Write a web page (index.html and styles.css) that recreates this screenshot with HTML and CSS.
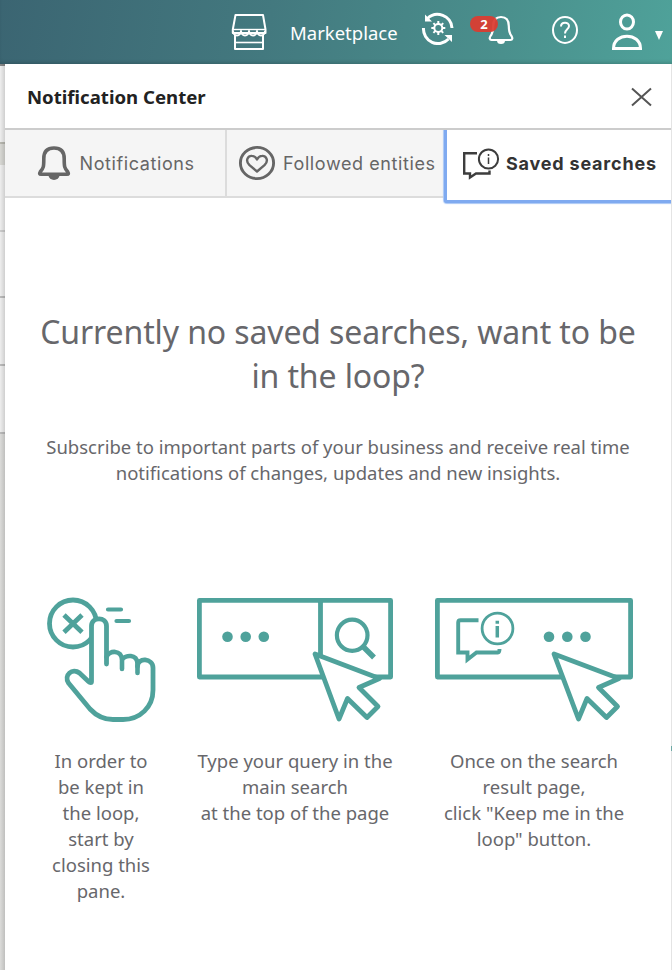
FILE: index.html
```html
<!DOCTYPE html>
<html lang="en">
<head>
<meta charset="utf-8">
<title>Notification Center</title>
<link rel="stylesheet" href="styles.css">
</head>
<body>
<header class="topbar">
  <svg class="ico-store" viewBox="231 13 36 38" fill="none" stroke="#fff" stroke-width="2" stroke-linejoin="round">
    <path d="M235.500 15H263L265.500 29.500V33H232.800V29.500Z"/><path d="M233 29.500H265" stroke-width="1.400"/>
    <path d="M233 31a4 4.500 0 0 0 8 0a4 4.500 0 0 0 8 0a4 4.500 0 0 0 8 0a4 4.500 0 0 0 8 0"/>
    <path d="M235 35V49H263V35" /><path d="M235 42.500H263" stroke-width="1.600"/>
  </svg>
  <span class="market">Marketplace</span>
  <svg class="ico-sync" viewBox="421 11 34 34" fill="none" stroke="#fff">
    <path d="M427.500 18.500A14.500 14.500 0 0 1 452 28M423.500 28A14.500 14.500 0 0 0 448.500 39" stroke-width="3"/>
    <path d="M425 14.500V21.500H432ZM452 42V35H444.500Z" fill="#fff" stroke="none"/>
    <circle cx="438.300" cy="28" r="4" stroke-width="2"/>
    <path d="M438.300 21v3M438.300 32v3M431.300 28h3M442.300 28h3M433.400 23.100l2 2M441.200 30.900l2 2M433.400 32.900l2-2M441.200 25.100l2-2" stroke-width="2"/>
  </svg>
  <span class="alerts">
    <svg viewBox="470 14 44 32" fill="none" stroke="#fff" stroke-width="2.200">
      <path d="M501 17C495.500 17 493.200 21 493.200 26C493.200 32 492.500 33.500 490.500 36C489.200 38 489.600 40 491.500 40H510.500C512.500 40 512.800 38 511.500 36C509.500 33.500 508.800 32 508.800 26C508.800 21 506.500 17 501 17Z"/>
      <path d="M497 40.500A4 3.500 0 0 0 505 40.500Z" fill="#fff" stroke="none"/>
    </svg>
    <b class="badge">2</b>
  </span>
  <svg class="ico-help" viewBox="551 15 28 30" fill="none" stroke="#fff" stroke-width="2">
    <ellipse cx="565" cy="30" rx="12" ry="13"/>
    <path d="M561 26.500C561 21.500 569 21.500 569 26C569 29.500 565 29 565 33.500M565 35.500V38"/>
  </svg>
  <svg class="ico-user" viewBox="611 13 32 38" fill="none" stroke="#fff" stroke-width="3">
    <ellipse cx="627" cy="22" rx="6.500" ry="7"/>
    <path d="M613.500 48.500C613.500 32 640.500 32 640.500 48.500Z"/>
  </svg>
  <svg class="ico-caret" viewBox="0 0 8 9"><path d="M0 0H8L4 9Z" fill="#fff"/></svg>
</header>
<div class="stage">
  <div class="behind"></div>
  <main class="panel">
    <div class="panel-head">
      <h1>Notification Center</h1>
      <svg class="close" viewBox="631 87 21 20" fill="none" stroke="#555" stroke-width="2"><path d="M632 88.500L651 105.500M651 88.500L632 105.500"/></svg>
    </div>
    <nav class="tabs">
      <div class="tab tab-a">
        <svg class="t-bell" viewBox="37 145 34 36" fill="none" stroke="#666" stroke-width="3.600">
          <path d="M54 148C47 148 43.800 152 43.800 158.500C43.800 167 43.500 168 40.500 171.500C39 174 39.800 174.300 41 174.300H67C68.300 174.300 69 174 67.500 171.500C64.500 168 64.200 167 64.200 158.500C64.200 152 61 148 54 148Z"/>
          <path d="M48.500 175A5.500 5 0 0 0 59.500 175Z" fill="#666" stroke="none"/>
        </svg>
        <span>Notifications</span>
      </div>
      <div class="tab tab-b">
        <svg class="t-heart" viewBox="238 145 38 36" fill="none" stroke="#666">
          <ellipse cx="257" cy="163" rx="16.600" ry="15.600" stroke-width="2.900"/>
          <path d="M257 171.500L249.500 165.200C244.500 160 248.500 155.600 252 155.900C254.500 156 256 157.500 257 159.500C258 157.500 259.500 156 262 155.900C265.500 155.600 269.500 160 264.500 165.200Z" stroke-width="2.400" stroke-linejoin="round"/>
        </svg>
        <span>Followed entities</span>
      </div>
      <div class="tab tab-c">
        <svg class="t-chat" viewBox="462 147 38 34" fill="none" stroke="#3d3d3d" stroke-width="2.400">
          <path d="M477 153.300H464.200V173.500H470V177.500L476 173.500H489.500V170.500" />
          <circle cx="488.500" cy="159" r="9.600" stroke-width="2"/>
          <path d="M488.500 157.500V164M488.500 154V156" stroke-width="1.500"/>
        </svg>
        <span>Saved searches</span>
      </div>
    </nav>
    <section class="empty">
      <h2>Currently no saved searches, want to be<br>in the loop?</h2>
      <p class="lead">Subscribe to important parts of your business and receive real time<br>notifications of changes, updates and new insights.</p>
      <div class="steps">
        <div class="step">
          <svg class="art-hand" viewBox="46 597 110 126" fill="none" stroke="#4fa29b" stroke-width="5" stroke-linecap="round" stroke-linejoin="round">
            <circle cx="73" cy="623.500" r="23.500" stroke-width="4.800"/>
            <path d="M64 615L82 632.200M82 615L64 632.200" stroke-linecap="butt" stroke-width="4.800"/>
            <path d="M108 609.500H121M116.500 621H129" stroke-width="4.200"/>
            <path d="M106.500 664V626C106.500 616.500 91.500 616.500 91.500 626V681.500C91.500 683 90 683 88.500 681.500L79.500 673C72.500 667.500 63.500 675 68.500 683L90 709C97 716.500 104 719.500 113 719.500H123C140 719.500 153 707 153 690V668C153 658 137.500 657 137.500 666.500" fill="#fff" stroke-width="4.800"/>
            <path d="M106.500 657C109 650 122 649.500 122 660V669M122 660C125 654.500 137.500 653.500 137.500 664V673" stroke-width="4.600"/>
          </svg>
          <p>In order to<br>be kept in<br>the loop,<br>start by<br>closing this<br>pane.</p>
        </div>
        <div class="step">
          <svg class="art-box" viewBox="196 597 198 126" fill="none" stroke="#4fa29b" stroke-width="4.800" stroke-linejoin="round">
            <path d="M199.400 600.400H390.600V677H199.400ZM320.500 600V660"/>
            <g fill="#4fa29b" stroke="none"><circle cx="227.500" cy="636.700" r="5.300"/><circle cx="245.700" cy="636.700" r="5.300"/><circle cx="263.800" cy="636.700" r="5.300"/></g>
            <ellipse cx="352.200" cy="635.300" rx="15.300" ry="15.600" stroke-width="4.200"/><path d="M363.500 647L374 657.500" stroke-width="5.500"/>
            <path d="M315 654L339 719L347.500 698.500L367 717.500L378 706.500L359 687.500L379.500 678.500Z" fill="#fff" stroke-width="4.800"/>
          </svg>
          <p>Type your query in the<br>main search<br>at the top of the page</p>
        </div>
        <div class="step">
          <svg class="art-box2" viewBox="434 597 200 126" fill="none" stroke="#4fa29b" stroke-width="4.800" stroke-linejoin="round">
            <path d="M437.400 600.400H630.600V677H437.400Z"/>
            <path d="M478.500 620.200H460.500Q458.200 620.200 458.200 622.500V652.500H467.500V659.500L476.500 652.500H498Q499.500 652.500 499.500 649" stroke-width="3.900" stroke-linejoin="miter"/>
            <circle cx="497.500" cy="628.500" r="15.400" stroke-width="2.800"/>
            <path d="M497.300 626V637.500M497.300 620.700V623.700" stroke-width="3.500"/>
            <g fill="#4fa29b" stroke="none"><circle cx="549" cy="636.700" r="5.300"/><circle cx="567.300" cy="636.700" r="5.300"/><circle cx="585.500" cy="636.700" r="5.300"/></g>
            <path d="M554 654L578.500 719L587 698.500L606.500 717.500L617.500 706.500L598.500 687.500L619 678.500Z" fill="#fff" stroke-width="4.800"/>
          </svg>
          <p>Once on the search<br>result page,<br>click "Keep me in the<br>loop" button.</p>
        </div>
      </div>
    </section>
  </main>
  <div class="edge"></div>
</div>
</body>
</html>
```
FILE: styles.css
```css
* { box-sizing: border-box; }
body { margin: 0; width: 672px; height: 970px; overflow: hidden; background: #fff; font-family: "Noto Sans", sans-serif; color: #67676b; }
svg { display: block; flex: none; }
h1, h2, p { margin: 0; }

.topbar { height: 64px; display: flex; align-items: flex-start; background: linear-gradient(100deg, #3b6572 0%, #43797f 40%, #4a908d 75%, #4fa29a 100%); box-shadow: inset 0 -3px 4px -2px rgba(0,0,0,.2); }
.ico-store { width: 36px; height: 38px; margin: 13px 0 0 231px; }
.market { width: 131px; margin: 20px 0 0 23px; font-size: 18.500px; line-height: 26px; color: #fff; white-space: nowrap; }
.ico-sync { width: 34px; height: 34px; margin-top: 11px; }
.alerts { position: relative; margin: 14px 0 0 15px; width: 44px; height: 32px; }
.alerts svg { width: 44px; height: 32px; }
.badge { position: absolute; left: 0; top: 2px; width: 28px; height: 16px; border-radius: 8px; background: rgba(219,61,49,.94); color: #fff; font-size: 13px; line-height: 16px; text-align: center; }
.ico-help { width: 28px; height: 30px; margin: 15px 0 0 37px; }
.ico-user { width: 32px; height: 38px; margin: 13px 0 0 32px; }
.ico-caret { width: 8px; height: 9px; margin: 31px 0 0 12px; }

.stage { display: flex; height: 906px; }
.behind { width: 5px; background: linear-gradient(to right, rgba(0,0,0,0), rgba(0,0,0,.13)), linear-gradient(#888 2px, #eee 2px 78px, #b8b8b0 78px 80px, #d8d8d4 80px 101px, #eee 101px 166px, #ccc 166px 168px, #eee 168px 232px, #bbb 232px 234px, #eee 234px 300px, #bbb 300px 302px, #eee 302px 368px, #bbb 368px 370px, #dcdcda 370px); }
.panel { width: 666px; background: #fff; }
.edge { width: 1px; background: linear-gradient(#e4e4e4 682px, #6fa9a5 682px 687px, #e4e4e4 687px); }

.panel-head { height: 66px; display: flex; justify-content: space-between; padding: 20px 19px 0 22px; border-bottom: 2px solid #ccc; }
.panel-head h1 { font-size: 18.600px; line-height: 26px; font-weight: 700; color: #222; white-space: nowrap; }
.close { width: 21px; height: 20px; margin-top: 3px; }

.tabs { display: flex; height: 74px; font-family: Inter, sans-serif; color: #666; }
.tab { display: flex; height: 68px; background: #f5f5f5; border-bottom: 2px solid #dcdcdc; white-space: nowrap; font-size: 18px; line-height: 26px; letter-spacing: .6px; }
.tab span { margin-top: 21px; }
.tab-a { width: 222px; border-right: 2px solid #dcdcdc; padding-left: 32px; }
.t-bell { width: 34px; height: 36px; margin: 15px 8.500px 0 0; }
.tab-b { width: 217px; padding-left: 11px; }
.t-heart { width: 38px; height: 36px; margin: 15px 7px 0 0; }
.tab-c { width: 227px; height: 73px; padding-left: 15px; background: #fff; color: #333; font-weight: 700; letter-spacing: .8px; border: solid #7faaf0; border-width: 0 0 3px 3px; border-radius: 0 0 0 3px; box-shadow: 0 0 1px 1px #a9c7f6; clip-path: inset(0 0 -3px -3px); }
.t-chat { width: 38px; height: 34px; margin: 17px 6px 0 0; }

.empty { text-align: center; padding-top: 106px; }
.empty h2 { font-size: 32px; line-height: 44px; font-weight: 400; letter-spacing: -.12px; white-space: nowrap; }
.lead { margin-top: 36px; font-size: 18.500px; line-height: 26px; white-space: nowrap; }
.steps { display: grid; grid-template-columns: 110px 198px 200px; column-gap: 40px; padding-left: 41px; margin-top: 111px; }
.step p { margin-top: 25px; font-size: 18.500px; line-height: 26px; white-space: nowrap; }
.art-hand { width: 110px; height: 126px; }
.art-box { width: 198px; height: 126px; }
.art-box2 { width: 200px; height: 126px; }
```
